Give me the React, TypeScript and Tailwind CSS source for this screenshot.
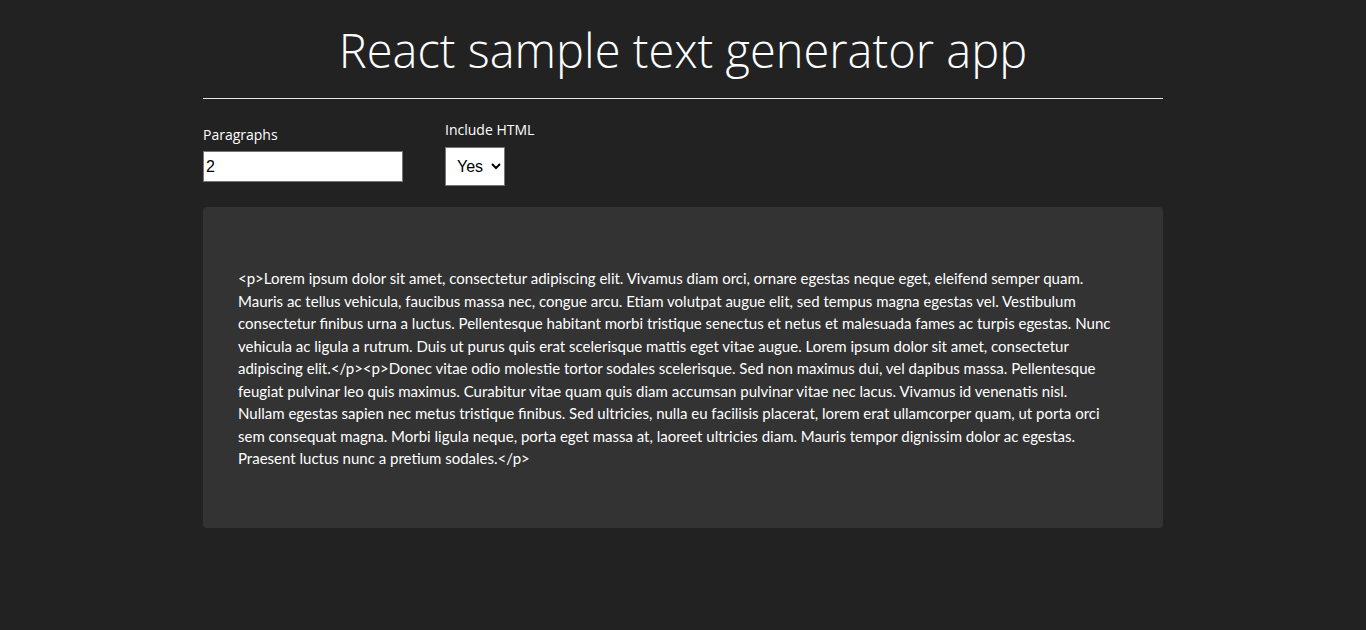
import { useState } from "react";

const TEXT =
  "<p>Lorem ipsum dolor sit amet, consectetur adipiscing elit. Vivamus diam orci, ornare egestas neque eget, eleifend semper quam. Mauris ac tellus vehicula, faucibus massa nec, congue arcu. Etiam volutpat augue elit, sed tempus magna egestas vel. Vestibulum consectetur finibus urna a luctus. Pellentesque habitant morbi tristique senectus et netus et malesuada fames ac turpis egestas. Nunc vehicula ac ligula a rutrum. Duis ut purus quis erat scelerisque mattis eget vitae augue. Lorem ipsum dolor sit amet, consectetur adipiscing elit.</p><p>Donec vitae odio molestie tortor sodales scelerisque. Sed non maximus dui, vel dapibus massa. Pellentesque feugiat pulvinar leo quis maximus. Curabitur vitae quam quis diam accumsan pulvinar vitae nec lacus. Vivamus id venenatis nisl. Nullam egestas sapien nec metus tristique finibus. Sed ultricies, nulla eu facilisis placerat, lorem erat ullamcorper quam, ut porta orci sem consequat magna. Morbi ligula neque, porta eget massa at, laoreet ultricies diam. Mauris tempor dignissim dolor ac egestas. Praesent luctus nunc a pretium sodales.</p>";

export default function App() {
  const [paras, setParas] = useState("2");
  const [html, setHtml] = useState("yes");

  return (
    <div className="min-h-[630px] bg-[#222222] text-white font-['Open_Sans',sans-serif]">
      <div className="mx-auto w-[960px]">
        <h1 className="pt-[21px] pb-[19px] text-center text-[47px] leading-[58px] font-light">
          React sample text generator app
        </h1>
        <hr className="border-0 border-t border-[#e5e5e5]" />

        {/* 設定フォーム */}
        <div className="mt-[21px] flex items-start gap-[42px]">
          <div className="mt-[5px] flex flex-col">
            <label className="mb-[6px] text-[14px] leading-[20px]">Paragraphs</label>
            <input
              value={paras}
              onChange={(e) => setParas(e.target.value)}
              className="h-[31px] w-[200px] border border-[#767676] bg-white px-[2px] text-[16px] text-black font-['Liberation_Sans',sans-serif] outline-none"
            />
          </div>
          <div className="flex flex-col">
            <label className="mb-[7px] text-[14px] leading-[20px]">Include HTML</label>
            <select
              value={html}
              onChange={(e) => setHtml(e.target.value)}
              className="h-[39px] w-[60px] border border-[#767676] bg-white pl-[7px] text-[16px] text-black font-['Liberation_Sans',sans-serif] outline-none"
            >
              <option value="yes">Yes</option>
              <option value="no">No</option>
            </select>
          </div>
        </div>

        {/* 生成テキスト */}
        <div className="mt-[21px] rounded-[4px] bg-[#333333] pl-[35px] pr-[47px] pt-[60px] pb-[58px]">
          <p className="text-[15px] leading-[22.5px] font-['Lato',sans-serif]">{TEXT}</p>
        </div>
      </div>
    </div>
  );
}
